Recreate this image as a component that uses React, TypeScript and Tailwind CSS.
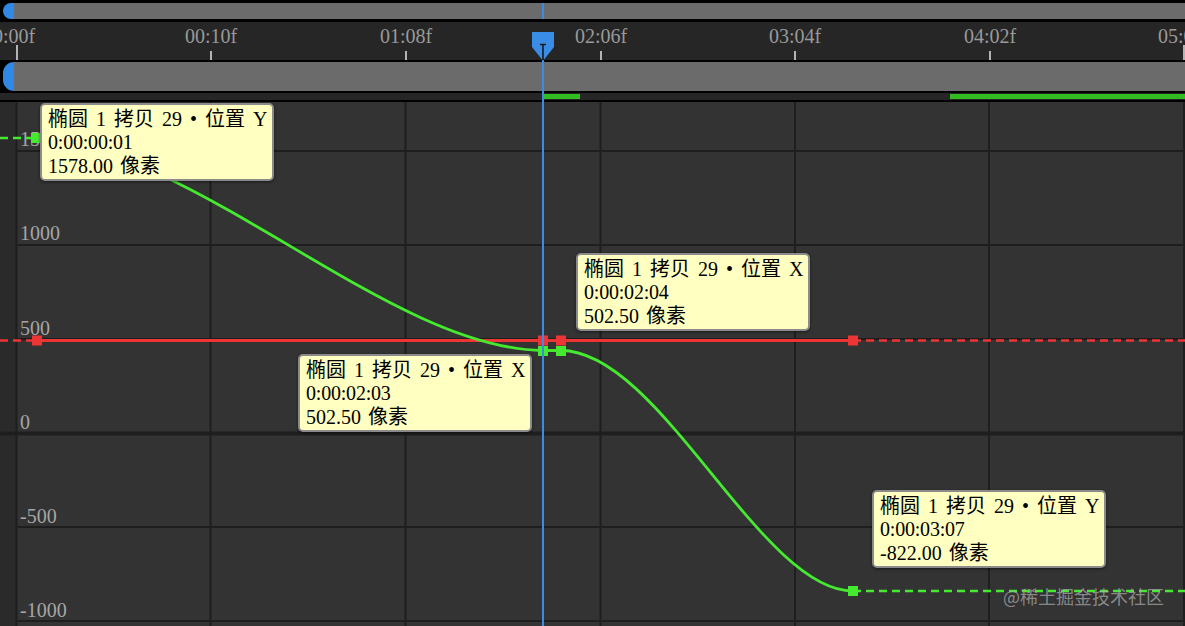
import { FC } from "react";

const SERIF = "font-['Liberation_Serif','Noto_Sans_CJK_SC',serif]";

type Mark = { x: number; label: string };
const rulerMarks: Mark[] = [
    { x: 17, label: "0:00f" },
    { x: 211, label: "00:10f" },
    { x: 406, label: "01:08f" },
    { x: 601, label: "02:06f" },
    { x: 795, label: "03:04f" },
    { x: 990, label: "04:02f" },
    { x: 1184, label: "05:00f" },
];

// baseline - 17, relative to graph top (102)
const valueLabels = [
    { top: 27, label: "1500" },
    { top: 121, label: "1000" },
    { top: 216, label: "500" },
    { top: 310, label: "0" },
    { top: 404, label: "-500" },
    { top: 498, label: "-1000" },
];

type Tip = { left: number; top: number; name: string; time: string; value: string };
const tips: Tip[] = [
    { left: 40, top: 1, name: "椭圆 1 拷贝 29 • 位置 Y", time: "0:00:00:01", value: "1578.00 像素" },
    { left: 576, top: 151, name: "椭圆 1 拷贝 29 • 位置 X", time: "0:00:02:04", value: "502.50 像素" },
    { left: 298, top: 252, name: "椭圆 1 拷贝 29 • 位置 X", time: "0:00:02:03", value: "502.50 像素" },
    { left: 872, top: 388, name: "椭圆 1 拷贝 29 • 位置 Y", time: "0:00:03:07", value: "-822.00 像素" },
];

const gridX = [210.5, 405.5, 600.5, 795, 989, 1184];
const gridY = [151, 245, 339, 527, 621];

const ScrollBar: FC<{ h: string }> = ({ h }) => (
    <div className={`flex ${h} bg-black pl-[3px]`}>
        <div className="w-[11px] rounded-l-full bg-[#2f87e6]" />
        <div className="flex-1 bg-[#6b6b6b]" />
    </div>
);

const Ruler = () => (
    <div className={`relative h-[38px] overflow-hidden bg-[#262626] ${SERIF}`}>
        {rulerMarks.map((m, i) => (
            <div key={m.label}>
                <span
                    className="absolute top-[4px] -translate-x-1/2 whitespace-nowrap text-[20px] leading-[20px] text-[#9a9a9a]"
                    style={{ left: i === 0 ? 14 : m.x }}
                >
                    {m.label}
                </span>
                <div
                    className={`absolute bottom-0 w-[2px] bg-[#b4b4b4] ${i === 0 || i === 6 ? "h-[15px]" : "h-[9px]"}`}
                    style={{ left: m.x - 1 }}
                />
            </div>
        ))}
        <svg className="absolute left-[532px] top-[10px]" width="22" height="28" viewBox="0 0 22 28">
            <path d="M0 0 H22 V15 L12.5 27 H9.5 L0 15 Z" fill="#3a8de6" />
            <path d="M8 12.5 H14 M11 12.5 V28" stroke="#1b1b1b" strokeWidth="1.6" fill="none" />
        </svg>
    </div>
);

const Tooltip: FC<{ tip: Tip }> = ({ tip }) => (
    <div
        className={`absolute w-[234px] rounded-[5px] border-2 border-[#8b8b8b] bg-[#ffffc2] pl-[6px] pr-[4px] pt-[2.5px] pb-[1px] text-[20px] leading-[23.5px] text-black shadow-[0_1px_3px_rgba(0,0,0,0.5)] ${SERIF}`}
        style={{ left: tip.left, top: tip.top }}
    >
        <div className="whitespace-nowrap [word-spacing:3px]">{tip.name}</div>
        <div className="whitespace-nowrap tracking-[-0.2px]">{tip.time}</div>
        <div className="whitespace-nowrap [word-spacing:2px]">{tip.value}</div>
    </div>
);

const Key: FC<{ x: number; y: number; c: string }> = ({ x, y, c }) => (
    <rect x={x - 5} y={y - 5} width="10" height="10" fill={c} />
);

const Graph = () => (
    <div className="relative flex flex-1 overflow-hidden">
        <div className="w-[16px] bg-[#2a2a2a]" />
        <div className="flex-1 bg-[#333333]" />

        {valueLabels.map((l) => (
            <span
                key={l.label}
                className={`absolute left-[20px] text-[20px] leading-[20px] text-[#a6a6a6] ${SERIF}`}
                style={{ top: l.top }}
            >
                {l.label}
            </span>
        ))}

        <svg className="absolute inset-0" width="1185" height="524" viewBox="0 102 1185 524">
            <line x1="16.5" y1="102" x2="16.5" y2="626" stroke="#1e1e1e" strokeWidth="2" />
            {gridX.map((x) => (
                <line key={x} x1={x} y1="102" x2={x} y2="626" stroke="#1e1e1e" strokeWidth="2" />
            ))}
            {gridY.map((y) => (
                <line key={y} x1="17" y1={y} x2="1185" y2={y} stroke="#1e1e1e" strokeWidth="2" />
            ))}
            <line x1="0" y1="433.5" x2="1185" y2="433.5" stroke="#1e1e1e" strokeWidth="4" />

            {/* position X (red) */}
            <line x1="0" y1="340.5" x2="37" y2="340.5" stroke="#ee3535" strokeWidth="2.5" strokeDasharray="8 5" />
            <line x1="37" y1="340.5" x2="853" y2="340.5" stroke="#ee3535" strokeWidth="2.8" />
            <line x1="853" y1="340.5" x2="1185" y2="340.5" stroke="#ee3535" strokeWidth="2.5" strokeDasharray="8 5" />

            {/* position Y (green) */}
            <line x1="0" y1="138" x2="36" y2="138" stroke="#45ea30" strokeWidth="2.5" strokeDasharray="8 5" />
            <path
                d="M36 138 C200 150, 390 349, 543 350.5 L561 350.5 C660 350.5, 760 591, 853 591"
                stroke="#45ea30"
                strokeWidth="2.8"
                fill="none"
            />
            <line x1="853" y1="591" x2="1185" y2="591" stroke="#45ea30" strokeWidth="2.5" strokeDasharray="8 5" />

            <Key x={37} y={340.5} c="#ee3535" />
            <Key x={543} y={340.5} c="#ee3535" />
            <Key x={561} y={340.5} c="#ee3535" />
            <Key x={853} y={340.5} c="#ee3535" />
            <Key x={36} y={138} c="#45ea30" />
            <Key x={543} y={351} c="#45ea30" />
            <Key x={561} y={351} c="#45ea30" />
            <Key x={853} y={591} c="#45ea30" />
        </svg>

        {tips.map((t) => (
            <Tooltip key={t.time} tip={t} />
        ))}

        <span className="absolute left-[1003px] top-[484px] whitespace-nowrap font-['Noto_Sans_CJK_SC',sans-serif] text-[18px] leading-[20px] text-[#b0b0b0]/70">
            @稀土掘金技术社区
        </span>
    </div>
);

export default function App() {
    return (
        <div className="relative flex h-[626px] w-[1185px] flex-col overflow-hidden bg-black">
            <div className="pt-[3px] pb-[3px] bg-black">
                <ScrollBar h="h-[16px]" />
            </div>
            <Ruler />
            <div className="py-[2px] bg-black">
                <ScrollBar h="h-[29px]" />
            </div>
            <div className="flex h-[7px] bg-[#262626] py-[1px]">
                <div className="ml-[543px] w-[37px] bg-[#31bd22]" />
                <div className="ml-[370px] flex-1 bg-[#31bd22]" />
            </div>
            <div className="h-[2px] bg-black" />
            <Graph />

            {/* playhead */}
            <div className="absolute left-[542px] top-[3px] h-[16px] w-[2px] bg-[#3a8de6]" />
            <div className="absolute bottom-0 left-[542px] top-[60px] w-[2px] bg-[#3a8de6]" />
        </div>
    );
}
